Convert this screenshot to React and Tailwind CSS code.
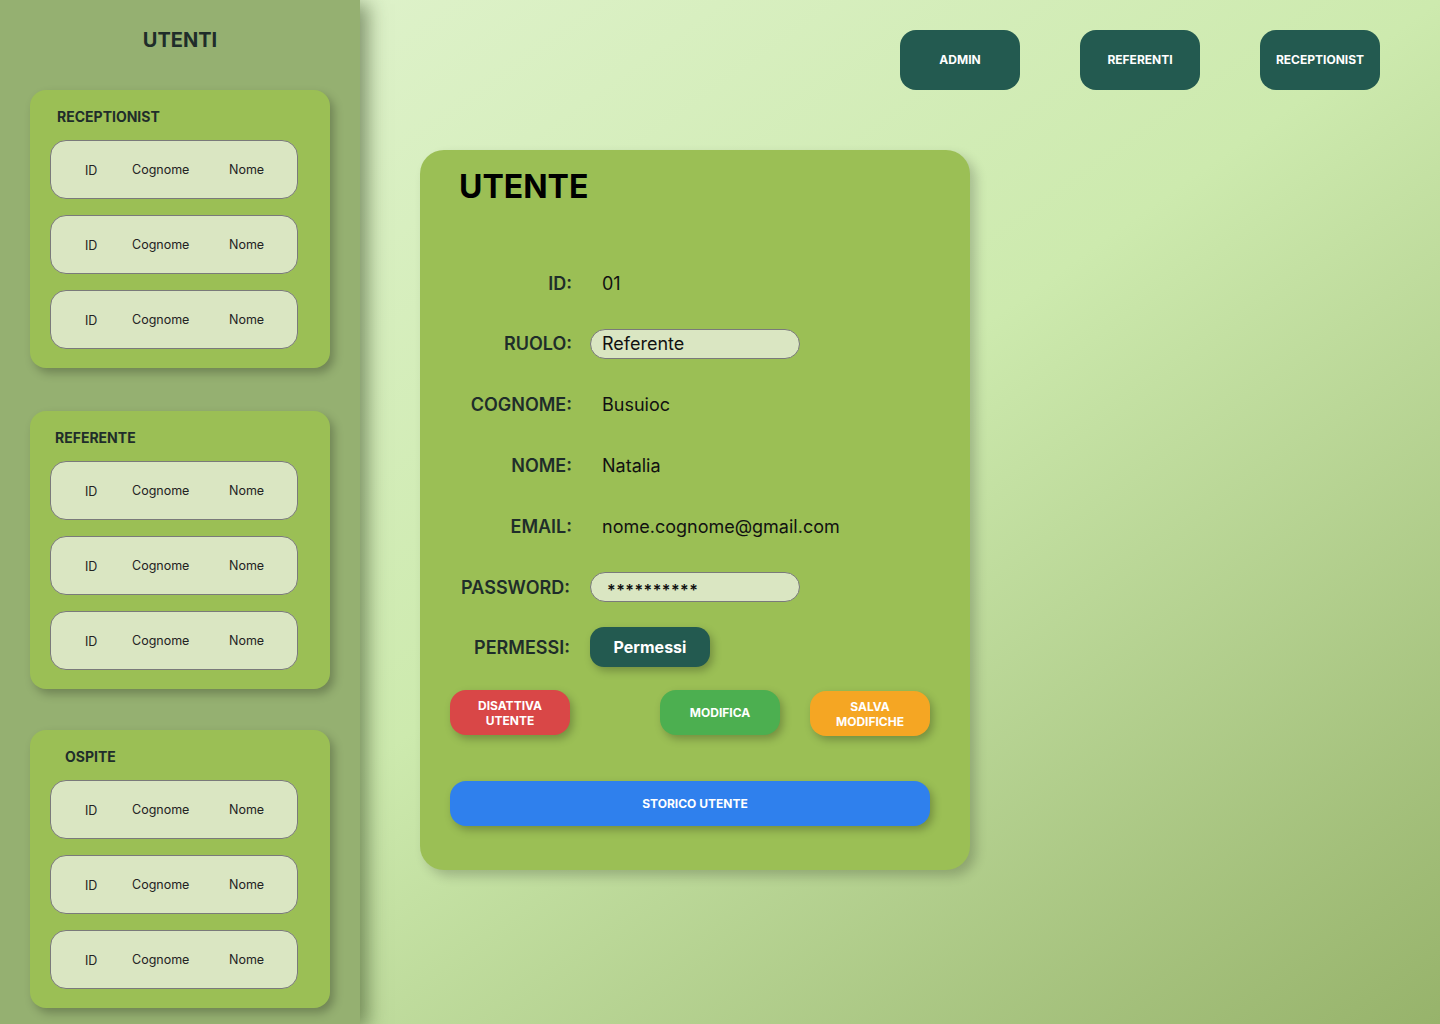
import React from 'react';

const groups = [
  { title: 'RECEPTIONIST', pl: 'pl-[7px]', mt: 'mt-[36px]' },
  { title: 'REFERENTE', pl: 'pl-[5px]', mt: 'mt-[43px]' },
  { title: 'OSPITE', pl: 'pl-[15px]', mt: 'mt-[41px]' },
];

function UserRow() {
  return (
    <div className="h-[59px] w-[248px] rounded-[16px] border border-[#7a7a7a] bg-[#dae6c2] flex items-center pl-[34px] pt-[2px] text-[12.5px] text-[#222]">
      <span className="w-[47px] pt-[2px]">ID</span>
      <span className="w-[97px]">Cognome</span>
      <span>Nome</span>
    </div>
  );
}

function Field({ label, children, h = 'h-[60px]', lpr = '' }) {
  return (
    <div className={`${h} flex items-center`}>
      <span className={`w-[152px] ${lpr} text-right text-[18px] font-semibold text-[#1f2d2a]`}>{label}</span>
      <div className="ml-[18px] flex items-center text-[18px] text-[#111]">{children}</div>
    </div>
  );
}

function TopButton({ children }) {
  return (
    <button className="w-[120px] h-[60px] rounded-[16px] bg-[#235a50] text-white text-[12px] font-bold">
      {children}
    </button>
  );
}

export default function App() {
  return (
    <div
      className="min-h-[1024px] w-[1440px] flex bg-gradient-to-br from-[#e3f4d2] via-[#cdeaae] to-[#97b36b] overflow-hidden"
      style={{ fontFamily: 'Inter, "Noto Sans", sans-serif' }}
    >
      <aside className="w-[360px] h-[1024px] shrink-0 bg-[#95b071] shadow-[8px_4px_18px_rgba(40,60,20,0.5)] flex flex-col items-center pt-[26px]">
        <h2 className="text-[20px] leading-[28px] font-bold text-[#1f2d2a]">UTENTI</h2>
        <div className="w-[300px]">
          {groups.map((g) => (
            <div
              key={g.title}
              className={`${g.mt} w-[300px] rounded-[16px] bg-[#9bbf55] shadow-[4px_5px_10px_rgba(0,0,0,0.25)] pt-[17px] pb-[19px] px-[20px]`}
            >
              <h3 className={`${g.pl} text-[14px] leading-[20px] font-bold text-[#1f2d2a]`}>{g.title}</h3>
              <div className="mt-[13px] flex flex-col gap-[16px]">
                <UserRow />
                <UserRow />
                <UserRow />
              </div>
            </div>
          ))}
        </div>
      </aside>

      <main className="flex-1 flex flex-col">
        <div className="pt-[30px] pr-[60px] flex justify-end gap-[60px]">
          <TopButton>ADMIN</TopButton>
          <TopButton>REFERENTI</TopButton>
          <TopButton>RECEPTIONIST</TopButton>
        </div>

        <section className="mt-[60px] ml-[60px] w-[550px] h-[720px] rounded-[24px] bg-[#9bbf55] shadow-[6px_6px_12px_rgba(0,0,0,0.2)] pt-[17px]">
          <h1 className="pl-[39px] text-[32px] leading-[40px] font-bold text-black">UTENTE</h1>

          <div className="mt-[47px]">
            <Field label="ID:" h="h-[59px]">
              <span className="pl-[12px]">01</span>
            </Field>
            <Field label="RUOLO:" h="h-[61px]">
              <div className="w-[210px] h-[30px] rounded-full border border-[#7a7a7a] bg-[#dae6c2] flex items-center pl-[11px]">
                Referente
              </div>
            </Field>
            <Field label="COGNOME:">
              <span className="pl-[12px]">Busuioc</span>
            </Field>
            <Field label="NOME:" h="h-[62px]">
              <span className="pl-[12px]">Natalia</span>
            </Field>
            <Field label="EMAIL:" h="h-[61px]">
              <span className="pl-[12px]">nome.cognome@gmail.com</span>
            </Field>
            <Field label="PASSWORD:" lpr="pr-[2px]">
              <div className="w-[210px] h-[30px] rounded-full border border-[#7a7a7a] bg-[#dae6c2] flex items-center pl-[16px] pt-[6px] text-[16px] font-semibold tracking-[0.5px]">
                **********
              </div>
            </Field>
            <Field label="PERMESSI:" lpr="pr-[2px]">
              <button className="w-[120px] h-[40px] rounded-[14px] bg-[#235a50] text-white text-[16px] font-bold shadow-[3px_4px_8px_rgba(0,0,0,0.25)]">
                Permessi
              </button>
            </Field>
          </div>

          <div className="mt-[13px] pl-[30px] flex items-start">
            <button className="w-[120px] h-[45px] rounded-[16px] bg-[#d94747] text-white text-[12px] leading-[15px] font-bold shadow-[3px_4px_8px_rgba(0,0,0,0.25)]">
              DISATTIVA<br />UTENTE
            </button>
            <button className="ml-[90px] w-[120px] h-[45px] rounded-[16px] bg-[#4caf50] text-white text-[12px] leading-[15px] font-bold shadow-[3px_4px_8px_rgba(0,0,0,0.25)]">
              MODIFICA
            </button>
            <button className="ml-[30px] mt-[1px] w-[120px] h-[45px] rounded-[16px] bg-[#f5a623] text-white text-[12px] leading-[15px] font-bold shadow-[3px_4px_8px_rgba(0,0,0,0.25)]">
              SALVA<br />MODIFICHE
            </button>
          </div>

          <div className="mt-[45px] pl-[30px]">
            <button className="w-[480px] h-[45px] rounded-[16px] bg-[#2f80ed] pl-[10px] text-white text-[12px] font-bold shadow-[3px_4px_8px_rgba(0,0,0,0.25)]">
              STORICO UTENTE
            </button>
          </div>
        </section>
      </main>
    </div>
  );
}
